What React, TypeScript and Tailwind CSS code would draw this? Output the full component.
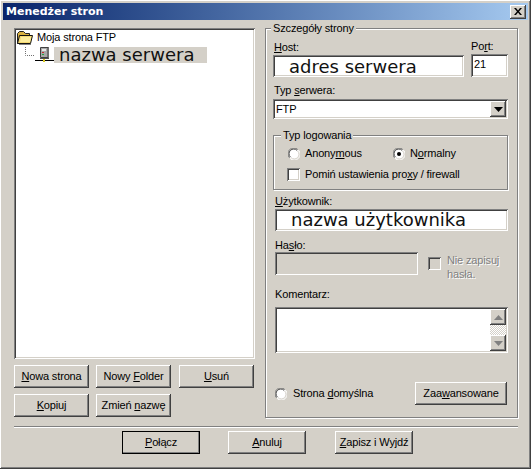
const raised =
  "bg-[#d4d0c8] shadow-[inset_-1px_-1px_#404040,inset_1px_1px_#fff,inset_-2px_-2px_#808080]";
const sunken =
  "bg-white shadow-[inset_1px_1px_#808080,inset_-1px_-1px_#fff,inset_2px_2px_#404040,inset_-2px_-2px_#d4d0c8]";
const bigText = "font-['DejaVu_Sans',sans-serif] text-[18px] leading-[20px] tracking-normal text-[#111]";

function Key({ children }: { children: string }) {
  return <u className="underline-offset-[1px]">{children}</u>;
}

function Button({
  children,
  className,
}: {
  children: React.ReactNode;
  className: string;
}) {
  return (
    <button type="button" className={`flex shrink-0 items-center justify-center ${raised} ${className}`}>
      {children}
    </button>
  );
}

function Radio({ checked, className }: { checked?: boolean; className?: string }) {
  return (
    <svg width="12" height="12" viewBox="0 0 12 12" className={`shrink-0 ${className ?? ""}`}>
      <circle cx="6" cy="6" r="5.5" fill="#fff" />
      <path d="M1.6 9.9A5.5 5.5 0 0 1 9.9 1.6" fill="none" stroke="#808080" />
      <path d="M2.4 9.1A4.5 4.5 0 0 1 9.1 2.4" fill="none" stroke="#404040" />
      <path d="M2.1 10.4A5.5 5.5 0 0 0 10.4 2.1" fill="none" stroke="#fff" />
      <path d="M3 9.6A4.5 4.5 0 0 0 9.6 3" fill="none" stroke="#d4d0c8" />
      {checked && <circle cx="6" cy="6" r="2" fill="#000" />}
    </svg>
  );
}

function FolderIcon() {
  return (
    <svg width="16" height="14" viewBox="0 0 16 14" className="shrink-0">
      <path d="M0.500 12.500V2.500L2.500 0.500H6.500L8.500 2.500H12.500V12.500Z" fill="#d8b040" stroke="#222" />
      <path d="M0.500 12.500L2.500 4.500H15.500L13.500 12.500Z" fill="#f4d870" stroke="#111" />
      <path d="M4 6H14L13 11H3Z" fill="#fcec9c" />
      <path d="M2 13.500H14" stroke="#808080" />
    </svg>
  );
}

function ServerIcon() {
  return (
    <svg width="30" height="17" viewBox="0 0 30 17" className="shrink-0">
      <path d="M0.500 1V9.500H10" fill="none" stroke="#707070" strokeDasharray="1 1" />
      <path d="M15.500 1.500H23.500V11.500H15.500Z" fill="#a8a8a8" stroke="#404040" />
      <path d="M22 2H24V11H22Z" fill="#707070" />
      <path d="M17 3H21V5H17Z" fill="#e8e8e8" />
      <path d="M17 6H19V7H17Z" fill="#c03030" />
      <path d="M17 8H19V9H17Z" fill="#20a040" />
      <path d="M15 12H24V13H15Z" fill="#505050" />
      <path d="M10 14.500H29" stroke="#000" />
      <path d="M18 13H20V16H18Z" fill="#d8c820" />
    </svg>
  );
}

function ScrollArrow({ up }: { up?: boolean }) {
  return (
    <div className={`flex h-[16px] items-center justify-center ${raised}`}>
      <svg width="9" height="5" viewBox="0 0 9 5">
        <path d={up ? "M4.500 0L9 5H0Z" : "M0 0H9L4.500 5Z"} fill="#808080" />
      </svg>
    </div>
  );
}

export default function App() {
  return (
    <div className="flex h-[469px] w-[531px] flex-col bg-[#d4d0c8] p-[3px] font-['Liberation_Sans',sans-serif] text-[11px] leading-[13px] tracking-[-0.15px] text-black shadow-[inset_-1px_-1px_#404040,inset_1px_1px_#fff,inset_-2px_-2px_#808080]">
      {/* title bar */}
      <div className="flex h-[17px] shrink-0 items-center justify-between bg-gradient-to-r from-[#0a246a] to-[#a6caf0] pl-[3px] pr-[2px]">
        <span className="font-['DejaVu_Sans',sans-serif] text-[11px] font-bold tracking-normal text-white">Menedżer stron</span>
        <button type="button" className={`flex h-[14px] w-[16px] items-center justify-center ${raised}`}>
          <svg width="8" height="7" viewBox="0 0 8 7">
            <path d="M0 0H2L4 2.500L6 0H8L5 3.500L8 7H6L4 4.500L2 7H0L3 3.500Z" fill="#000" />
          </svg>
        </button>
      </div>

      <div className="flex flex-col pl-[11px] pt-[2px]">
        <div className="flex h-[404px] gap-[10px]">
          {/* left side: tree and its buttons */}
          <div className="flex w-[241px] shrink-0 flex-col pt-[6px]">
            <div className={`h-[331px] pl-[2px] pt-[2px] ${sunken}`}>
              <div className="flex h-[15px] items-center gap-[4px] pl-[1px]">
                <FolderIcon />
                <span>Moja strona FTP</span>
              </div>
              <div className="mt-[1px] flex items-center pl-[9px]">
                <ServerIcon />
                <span className={`-ml-[1px] flex h-[16px] w-[153px] items-center bg-[#d4d0c8] pl-[5px] ${bigText}`}>
                  nazwa serwera
                </span>
              </div>
            </div>
            <div className="mt-[6px] flex gap-[7px]">
              <Button className="h-[23px] w-[75px]"><span><Key>N</Key>owa strona</span></Button>
              <Button className="h-[23px] w-[75px]"><span>Nowy <Key>F</Key>older</span></Button>
              <Button className="ml-[1px] h-[23px] w-[75px]"><span><Key>U</Key>suń</span></Button>
            </div>
            <div className="mt-[6px] flex gap-[7px]">
              <Button className="h-[23px] w-[75px]"><span><Key>K</Key>opiuj</span></Button>
              <Button className="h-[23px] w-[75px]"><span>Zmień <Key>n</Key>azwę</span></Button>
            </div>
          </div>

          {/* right side: site details */}
          <fieldset className="h-[396px] w-[253px] shrink-0 border border-[#808080] px-[7px] shadow-[inset_1px_1px_#fff,1px_1px_#fff]">
            <legend className="-ml-[2px] bg-[#d4d0c8] px-[2px] leading-[13px]">Szczegóły strony</legend>

            <div className="flex gap-[7px] pt-[5px]">
              <div className="flex w-[191px] flex-col pt-[1px]">
                <label className="h-[14px] pl-[1px]"><Key>H</Key>ost:</label>
                <div className={`h-[22px] pl-[16px] ${bigText} ${sunken}`}>
                  <span className="block pt-[2px]">adres serwera</span>
                </div>
              </div>
              <div className="flex w-[37px] flex-col">
                <label className="h-[14px]">Po<Key>r</Key>t:</label>
                <div className={`h-[23px] pl-[3px] pt-[4px] ${sunken}`}>21</div>
              </div>
            </div>

            <label className="mt-[7px] block h-[15px] pl-[1px]">Typ <Key>s</Key>erwera:</label>
            <div className={`flex h-[20px] w-[235px] items-center justify-between pl-[3px] pr-[2px] ${sunken}`}>
              <span>FTP</span>
              <div className={`flex h-[16px] w-[16px] items-center justify-center ${raised}`}>
                <svg width="9" height="5" viewBox="0 0 9 5"><path d="M0 0H9L4.500 5Z" fill="#000" /></svg>
              </div>
            </div>

            <fieldset className="mt-[10px] h-[61px] w-[235px] border border-[#808080] shadow-[inset_1px_1px_#fff,1px_1px_#fff]">
              <legend className="ml-[7px] bg-[#d4d0c8] px-[2px] leading-[13px]">Typ logowania</legend>
              <div className="flex items-center pl-[14px] pt-[5px]">
                <Radio />
                <span className="ml-[5px] w-[88px]">Anony<Key>m</Key>ous</span>
                <Radio checked />
                <span className="ml-[5px]">N<Key>o</Key>rmalny</span>
              </div>
              <div className="flex items-center pl-[13px] pt-[8px]">
                <div className={`h-[13px] w-[13px] shrink-0 ${sunken}`} />
                <span className="ml-[5px]">Pomiń ustawienia pro<Key>x</Key>y / firewall</span>
              </div>
            </fieldset>

            <label className="mt-[5px] block h-[14px] pl-[2px]"><Key>U</Key>żytkownik:</label>
            <div className={`ml-[2px] h-[22px] w-[233px] pl-[16px] ${bigText} ${sunken}`}>
              <span className="block pt-[1px]">nazwa użytkownika</span>
            </div>

            <label className="mt-[8px] block h-[13px] pl-[2px]">Ha<Key>s</Key>ło:</label>
            <div className="ml-[2px] flex">
              <div className={`h-[23px] w-[143px] shrink-0 !bg-[#d4d0c8] ${sunken}`} />
              <div className="ml-[10px] flex pt-[5px]">
                <div className={`mr-[6px] h-[13px] w-[13px] shrink-0 !bg-[#d4d0c8] ${sunken}`} />
                <span className="-mt-[4px] w-[58px] leading-[14px] text-[#808080] [text-shadow:1px_1px_#fff]">Nie zapisuj hasła.</span>
              </div>
            </div>

            <label className="mt-[7px] block h-[19px] pl-[2px]">Komentarz:</label>
            <div className={`ml-[2px] flex h-[46px] w-[233px] justify-end pr-[2px] pt-[2px] ${sunken}`}>
              <div className="flex h-[42px] w-[16px] flex-col justify-between bg-[repeating-conic-gradient(#fff_0_25%,#d4d0c8_0_50%)] bg-[length:2px_2px]">
                <ScrollArrow up />
                <ScrollArrow />
              </div>
            </div>

            <div className="mt-[29px] flex items-center justify-between pl-[2px] pr-[3px]">
              <div className="flex items-center">
                <Radio />
                <span className="ml-[6px]">Strona <Key>d</Key>omyślna</span>
              </div>
              <Button className="h-[23px] w-[92px]"><span>Zaa<Key>w</Key>ansowane</span></Button>
            </div>
          </fieldset>
        </div>

        {/* bottom row */}
        <div className="h-[2px] w-[504px] border-t border-[#808080] border-b-white [border-bottom-width:1px]" />
        <div className="mt-[3px] flex pl-[108px]">
          <Button className="h-[23px] w-[78px] outline outline-1 -outline-offset-1 outline-black"><span><Key>P</Key>ołącz</span></Button>
          <Button className="ml-[28px] h-[23px] w-[78px]"><span><Key>A</Key>nuluj</span></Button>
          <Button className="ml-[29px] h-[23px] w-[78px]"><span><Key>Z</Key>apisz i Wyjdź</span></Button>
        </div>
      </div>
    </div>
  );
}
